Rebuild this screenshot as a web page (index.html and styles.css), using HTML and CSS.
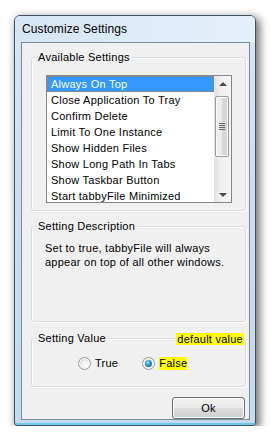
FILE: index.html
```html
<!DOCTYPE html>
<html lang="en">
  <head>
    <title>Customize Settings</title>
    <meta charset="UTF-8">
    <link rel="stylesheet" href="styles.css">
  </head>
  <body>
    <div class="window">
      <div class="titlebar">Customize Settings</div>
      <div class="client">
        <!--List of settings-->
        <div class="group group-list">
          <div class="group-head"><span class="group-title">Available Settings</span></div>
          <div class="listbox">
            <ul class="items">
              <li class="selected">Always On Top</li>
              <li>Close Application To Tray</li>
              <li>Confirm Delete</li>
              <li>Limit To One Instance</li>
              <li>Show Hidden Files</li>
              <li>Show Long Path In Tabs</li>
              <li>Show Taskbar Button</li>
              <li>Start tabbyFile Minimized</li>
            </ul>
            <div class="scrollbar">
              <div class="arrow-btn"><span class="arrow up"></span></div>
              <div class="track">
                <div class="thumb"><span class="grip"></span></div>
              </div>
              <div class="arrow-btn"><span class="arrow down"></span></div>
            </div>
          </div>
        </div>
        <!--Description of selected setting-->
        <div class="group group-desc">
          <div class="group-head"><span class="group-title">Setting Description</span></div>
          <p class="desc">Set to true, tabbyFile will always appear on top of all other windows.</p>
        </div>
        <!--Value of selected setting-->
        <div class="group group-value">
          <div class="group-head">
            <span class="group-title">Setting Value</span>
            <span class="default-tag">default value</span>
          </div>
          <div class="radios">
            <label class="radio-item"><span class="radio"></span><span class="radio-label">True</span></label>
            <label class="radio-item"><span class="radio checked"></span><span class="radio-label default">False</span></label>
          </div>
        </div>
        <div class="buttons">
          <button type="button" class="button">Ok</button>
        </div>
      </div>
    </div>
  </body>
</html>
```

FILE: styles.css
```css
body {
  margin: 0;
  background: #ffffff;
  font-family: "Liberation Sans", Arial, sans-serif;
  font-size: 11px;
  letter-spacing: 0.25px;
  color: #000000;
}
.window {
  margin: 15px 0 0 14px;
  width: 242px;
  height: 411px;
  box-sizing: border-box;
  border: 1px solid #44515e;
  border-radius: 6px 6px 3px 3px;
  padding: 0 5px 5px 6px;
  display: flex;
  flex-direction: column;
  background: linear-gradient(to bottom, #dfebf7 0%, #d3e4f4 10%, #c9ddf1 60%, #c4daf0 100%);
  box-shadow: 3px 3px 8px 1px rgba(0, 0, 0, 0.55), inset 0 -2px 0 #6fc9ee;
}
.titlebar {
  height: 26px;
  box-sizing: border-box;
  padding: 5px 0 0 7px;
  margin: 0 -5px 0 -6px;
  line-height: 16px;
  font-size: 12px;
  letter-spacing: 0.1px;
  background: linear-gradient(to right, #d6e5f4 0%, #dfebf8 60%, #e6f0fa 100%);
  border-radius: 5px 5px 0 0;
}
.client {
  flex: 1;
  border: 1px solid #7c8b9b;
  background: #f0f0f0;
  padding: 0 3px 0 9px;
  display: flex;
  flex-direction: column;
}
.group {
  border: 1px solid #d5dfe5;
  border-radius: 3px;
  box-shadow: 1px 1px 0 #ffffff, inset 1px 1px 0 #ffffff;
  padding-left: 4px;
}
.group-head {
  display: flex;
  justify-content: space-between;
  align-items: flex-start;
  height: 13px;
  line-height: 13px;
  margin-top: -7px;
}
.group-title {
  background: #f0f0f0;
  padding: 0 2px;
}
.group-list {
  margin-top: 14px;
  padding-right: 13px;
  padding-bottom: 7px;
}
.listbox {
  margin: 11px 0 0 10px;
  height: 128px;
  box-sizing: border-box;
  border: 1px solid #828790;
  background: #ffffff;
  display: flex;
  overflow: hidden;
}
.items {
  list-style: none;
  margin: 0;
  padding: 0;
  flex: 1;
}
.items li {
  height: 16px;
  line-height: 14px;
  box-sizing: border-box;
  border: 1px solid transparent;
  padding-left: 3px;
  white-space: nowrap;
}
.items li.selected {
  background: #3399ff;
  color: #ffffff;
  border: 1px dotted #c87b2a;
}
.scrollbar {
  width: 17px;
  display: flex;
  flex-direction: column;
  background: linear-gradient(to right, #e2e2e2 0%, #f0f0f0 40%, #f4f4f4 100%);
}
.arrow-btn {
  height: 17px;
  display: flex;
  align-items: center;
  justify-content: center;
}
.arrow {
  width: 0;
  height: 0;
  border-left: 4px solid transparent;
  border-right: 4px solid transparent;
}
.arrow.up {
  border-bottom: 4px solid #4a4a4a;
  margin-top: -1px;
}
.arrow.down {
  border-top: 4px solid #4a4a4a;
  margin-top: 3px;
}
.track {
  flex: 1;
  padding-top: 3px;
}
.thumb {
  height: 61px;
  margin: 0 2px 0 1px;
  box-sizing: border-box;
  border: 1px solid #9c9c9c;
  border-radius: 2px;
  background: linear-gradient(to right, #f2f2f2 0%, #e8e8e8 50%, #d9d9d9 51%, #d4d4d4 100%);
  box-shadow: inset 0 0 0 1px #fafafa;
  display: flex;
  align-items: center;
  justify-content: center;
}
.grip {
  width: 6px;
  height: 7px;
  background: repeating-linear-gradient(to bottom, #6b6b6b 0, #6b6b6b 1px, transparent 1px, transparent 2px);
}
.group-desc {
  margin-top: 15px;
  padding-right: 13px;
  padding-bottom: 52px;
}
.desc {
  margin: 8px 0 0 9px;
  line-height: 14px;
}
.group-value {
  margin-top: 16px;
  padding-bottom: 16px;
}
.default-tag {
  background: #ffff00;
  line-height: 12px;
  margin: 1px 1px 0 0;
  padding: 0 1px;
}
.radios {
  margin-top: 12px;
  padding-left: 42px;
  display: flex;
  gap: 24px;
  height: 13px;
}
.radio-item {
  display: flex;
  align-items: center;
  gap: 4px;
}
.radio {
  width: 13px;
  height: 13px;
  box-sizing: border-box;
  border-radius: 50%;
  border: 1px solid #9a9a9a;
  background: radial-gradient(circle at 60% 65%, #ffffff 0%, #ececec 45%, #cfcfcf 100%);
  box-shadow: inset 0 0 0 1px #f6f6f6;
  display: flex;
  align-items: center;
  justify-content: center;
}
.radio.checked::after {
  content: "";
  width: 7px;
  height: 7px;
  border-radius: 50%;
  background: radial-gradient(circle at 40% 35%, #9fe3ff 0%, #2a8fd6 45%, #0b3f7a 100%);
}
.radio-label {
  line-height: 13px;
}
.radio-label.default {
  background: #ffff00;
}
.buttons {
  display: flex;
  justify-content: flex-end;
  margin-top: 10px;
  padding-right: 1px;
}
.button {
  width: 73px;
  height: 22px;
  border: 1px solid #707070;
  border-radius: 3px;
  background: linear-gradient(to bottom, #f2f2f2 0%, #ebebeb 48%, #dddddd 52%, #cfcfcf 100%);
  box-shadow: inset 0 0 0 1px #fbfbfb;
  font-family: "Liberation Sans", Arial, sans-serif;
  font-size: 11px;
  letter-spacing: 0.25px;
  color: #000000;
  padding: 0;
}
```
